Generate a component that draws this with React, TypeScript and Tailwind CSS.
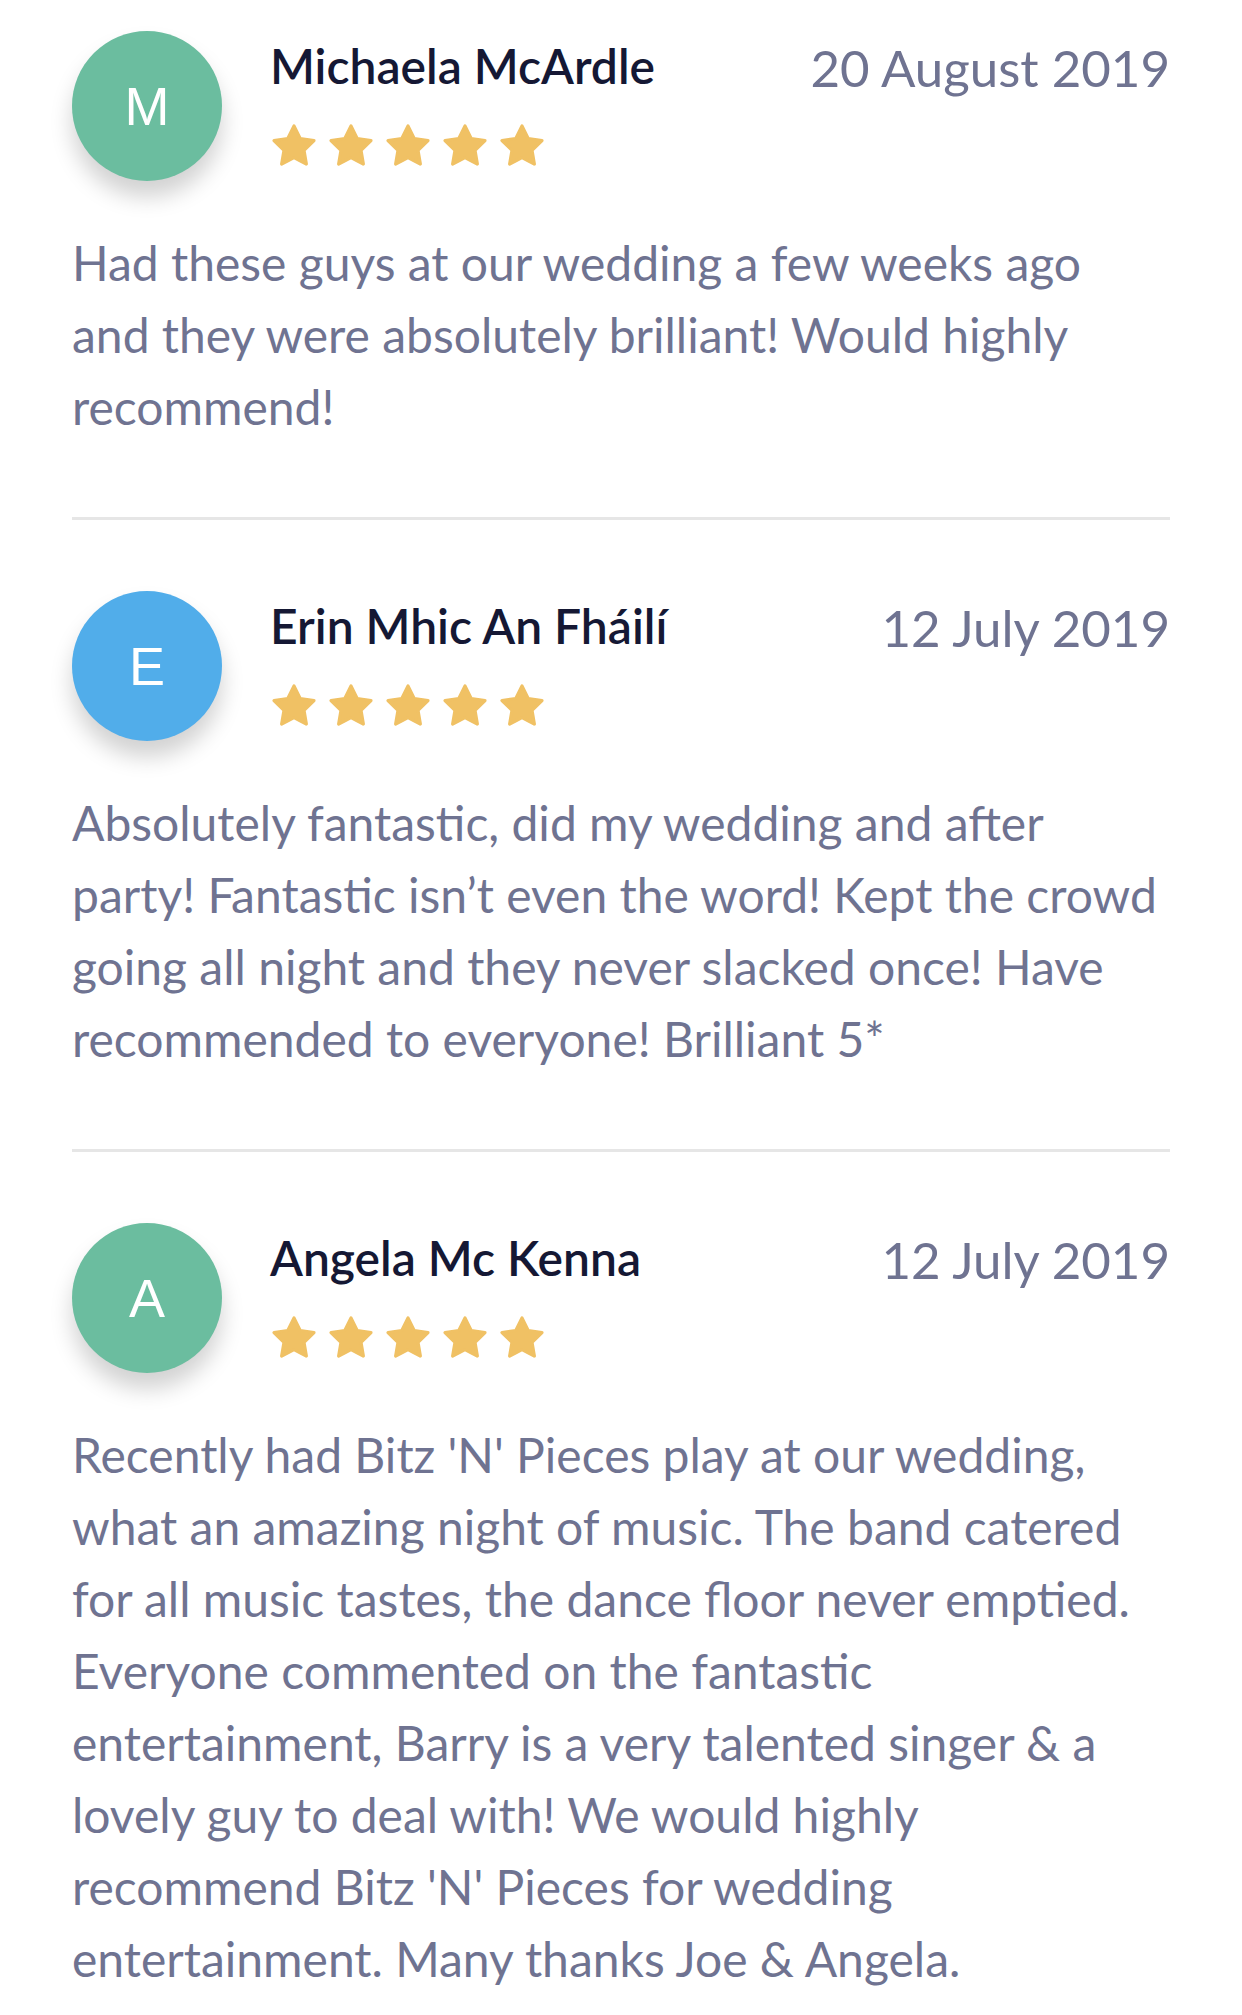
import React from 'react';

type Review = {
  name: string;
  initial: string;
  color: string;
  date: string;
  text: string;
};

const reviews: Review[] = [
  {
    name: 'Michaela McArdle',
    initial: 'M',
    color: 'bg-[#6bbd9f]',
    date: '20 August 2019',
    text: 'Had these guys at our wedding a few weeks ago and they were absolutely brilliant! Would highly recommend!',
  },
  {
    name: 'Erin Mhic An Fháilí',
    initial: 'E',
    color: 'bg-[#51adea]',
    date: '12 July 2019',
    text: 'Absolutely fantastic, did my wedding and after party! Fantastic isn’t even the word! Kept the crowd going all night and they never slacked once! Have recommended to everyone! Brilliant 5*',
  },
  {
    name: 'Angela Mc Kenna',
    initial: 'A',
    color: 'bg-[#6bbd9f]',
    date: '12 July 2019',
    text: "Recently had Bitz 'N' Pieces play at our wedding, what an amazing night of music. The band catered for all music tastes, the dance floor never emptied. Everyone commented on the fantastic entertainment, Barry is a very talented singer & a lovely guy to deal with! We would highly recommend Bitz 'N' Pieces for wedding entertainment. Many thanks Joe & Angela.",
  },
];

const Star: React.FC = () => (
  <svg className="w-[48px] h-[50px]" viewBox="0 0 24 24" fill="#f0c164" stroke="#f0c164" strokeWidth={1.6} strokeLinejoin="round">
    <path d="M12 2l3.09 6.26L22 9.27l-5 4.87 1.18 6.88L12 17.77l-6.18 3.25L7 14.14 2 9.27l6.91-1.01L12 2z" />
  </svg>
);

const ReviewItem: React.FC<{ review: Review; first: boolean }> = ({ review, first }) => (
  <article className={first ? 'pb-[74px]' : 'pt-[71px] pb-[74px] border-t-[3px] border-[#e6e6e6]'}>
    <div className="flex items-start">
      <div
        className={`w-[150px] h-[150px] shrink-0 rounded-full ${review.color} flex items-center justify-center text-white text-[54px] shadow-[0_16px_22px_rgba(0,0,0,0.18)] font-['Liberation_Sans',Arial,sans-serif]`}
      >
        {review.initial}
      </div>
      <div className="ml-[48px] flex-1">
        <div className="flex items-start justify-between mt-[6px]">
          <h3 className="text-[48px] leading-[58px] font-semibold text-[#151834]">{review.name}</h3>
          <span className="text-[51px] leading-[62px] text-[#6f7391]">{review.date}</span>
        </div>
        <div className="flex gap-[9px] mt-[22px]">
          <Star />
          <Star />
          <Star />
          <Star />
          <Star />
        </div>
      </div>
    </div>
    <p className="mt-[46px] text-[48px] leading-[72px] text-[#6f7391]">{review.text}</p>
  </article>
);

export default function App() {
  return (
    <div className="min-h-screen bg-white px-[72px] pt-[31px] font-['Lato','Noto_Sans',sans-serif]">
      {reviews.map((r, i) => (
        <ReviewItem key={r.name} review={r} first={i === 0} />
      ))}
    </div>
  );
}
